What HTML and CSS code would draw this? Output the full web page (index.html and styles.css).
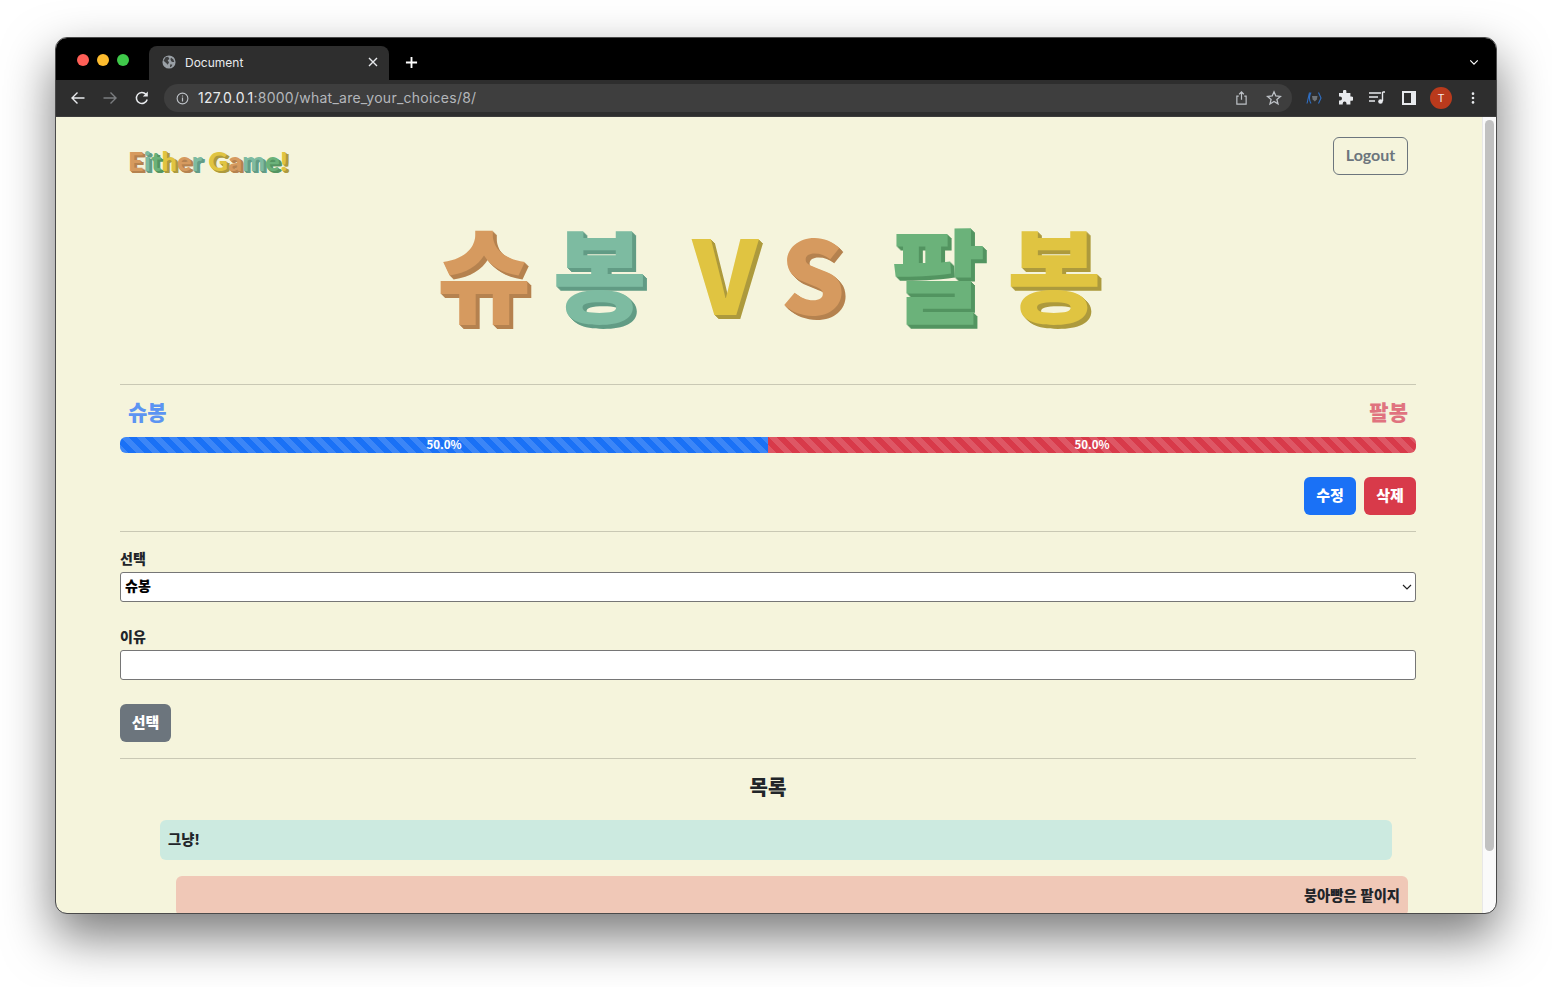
FILE: index.html
```html
<!DOCTYPE html>
<html lang="ko">
<head>
  <meta charset="UTF-8" />
  <title>Document</title>
  <link rel="stylesheet" href="styles.css">
</head>
<body>
  <div class="window">
    <div class="tabstrip">
      <div class="traffic">
        <span class="dot dot-red"></span>
        <span class="dot dot-yellow"></span>
        <span class="dot dot-green"></span>
      </div>
      <div class="tab">
        <svg class="tab-globe" viewBox="0 0 16 16"><circle cx="8" cy="8" r="7.500" fill="#9aa0a6"/><path d="M4 2.500 7 2 8.500 4.500 6.500 6 8 8.500 6.500 11 5 9.500 1.800 6.500ZM10.500 3l2.500 2 1 3-2 0-1.500-1-1-2.500ZM9.500 10.500l2.500.5-1.500 2.500-1.500.5Z" fill="#2e2e2e" opacity="0.85"/></svg>
        <span class="tab-title">Document</span>
        <svg class="tab-close" viewBox="0 0 10 10"><path d="M1 1l8 8M9 1l-8 8" stroke="#e8eaed" stroke-width="1.400"/></svg>
      </div>
      <svg class="new-tab" viewBox="0 0 14 14"><path d="M7 1v12M1 7h12" stroke="#fff" stroke-width="2"/></svg>
      <svg class="tab-menu" viewBox="0 0 12 8"><path d="M1.500 1.500 6 6l4.500-4.500" fill="none" stroke="#fff" stroke-width="1.400"/></svg>
    </div>

    <div class="toolbar">
      <svg class="tool" viewBox="0 0 16 16"><path d="M14.500 8H2M7.500 2.500 2 8l5.500 5.500" fill="none" stroke="#e8eaed" stroke-width="1.400"/></svg>
      <svg class="tool" viewBox="0 0 16 16"><path d="M1.500 8H14M8.500 2.500 14 8l-5.500 5.500" fill="none" stroke="#7b7d80" stroke-width="1.400"/></svg>
      <svg class="tool" viewBox="0 0 16 16"><path d="M13.200 9.500A5.500 5.500 0 1 1 12 4.300" fill="none" stroke="#e8eaed" stroke-width="1.500"/><path d="M13.800 1.500V6.500H8.800Z" fill="#e8eaed"/></svg>
      <div class="omnibox">
        <svg class="info" viewBox="0 0 14 14"><circle cx="7" cy="7" r="5.800" fill="none" stroke="#bdc1c6" stroke-width="1.200"/><path d="M7 6v4.200M7 3.700v1.200" stroke="#bdc1c6" stroke-width="1.300"/></svg>
        <span class="url"><b>127.0.0.1</b>:8000/what_are_your_choices/8/</span>
        <svg class="omni-icon share" viewBox="0 0 14 16"><path d="M4 6H2v8.500h10V6h-2M7 10V1.500M4.500 4 7 1.500 9.500 4" fill="none" stroke="#bdc1c6" stroke-width="1.300"/></svg>
        <svg class="omni-icon star" viewBox="0 0 16 16"><path d="M8 1.800 9.800 6l4.600.4-3.500 3 1.100 4.500L8 11.500l-4 2.400 1.100-4.500-3.500-3L6.200 6Z" fill="none" stroke="#bdc1c6" stroke-width="1.300"/></svg>
      </div>
      <svg class="ext ext-cast" viewBox="0 0 16 13"><path d="M3.500 1 1 12M5 1C3 4.500 3 8.500 5 12M12.500 1 15 6.500 12.500 12" fill="none" stroke="#2f6fc4" stroke-width="1.100"/><path d="M6 4.500h5.500l-.7 3.500L8.800 10 6.700 8Z" fill="#6f7479"/></svg>
      <svg class="ext puzzle" viewBox="0 0 16 16"><path d="M6 1.500a1.700 1.700 0 0 1 3.400 0V3h4v3.500h1a2 2 0 0 1 0 4.200h-1V14.500H9.500v-1a1.900 1.900 0 0 0-3.800 0v1H2V10.500h1a2 2 0 0 0 0-4H2V3h4Z" fill="#e8eaed"/></svg>
      <svg class="ext queue" viewBox="0 0 16 14"><path d="M0 2h12M0 6h9M0 10h6" stroke="#e8eaed" stroke-width="1.300"/><path d="M13.500 1v9" stroke="#e8eaed" stroke-width="1.400"/><path d="M13.500 1H16" stroke="#e8eaed" stroke-width="1.400"/><circle cx="11.500" cy="10.500" r="2.300" fill="#e8eaed"/></svg>
      <svg class="ext panel" viewBox="0 0 14 14"><path d="M0 0h14v14H0Z" fill="#e8eaed"/><path d="M2 2h7v10H2Z" fill="#2e2e2e"/></svg>
      <span class="avatar">T</span>
      <svg class="kebab" viewBox="0 0 4 16"><circle cx="2" cy="3" r="1.500" fill="#e8eaed"/><circle cx="2" cy="8" r="1.500" fill="#e8eaed"/><circle cx="2" cy="13" r="1.500" fill="#e8eaed"/></svg>
    </div>

    <div class="viewport">
      <main class="page">
        <nav class="topnav">
          <a class="logo">
            <span class="c-orange">E</span><span class="c-mint">i</span><span class="c-green">t</span><span class="c-yellow">h</span><span class="c-orange">e</span><span class="c-mint">r</span>
            <span class="c-yellow">G</span><span class="c-orange">a</span><span class="c-mint">m</span><span class="c-green">e</span><span class="c-yellow">!</span>
          </a>
          <button class="btn-logout">Logout</button>
        </nav>

        <h1 class="versus">
          <span class="c-orange">슈</span>
          <span class="c-mint">봉</span>
          <span class="vs">
            <span class="c-yellow">V</span>
            <span class="c-orange">S</span>
          </span>
          <span class="c-green">팔</span>
          <span class="c-yellow">봉</span>
        </h1>

        <hr class="rule rule-first">

        <div class="names">
          <span class="name-a">슈봉</span>
          <span class="name-b">팔봉</span>
        </div>
        <div class="progress">
          <div class="bar bar-blue" style="width: 50%">50.0%</div>
          <div class="bar bar-red" style="width: 50%">50.0%</div>
        </div>

        <div class="actions">
          <button class="btn btn-blue">수정</button>
          <button class="btn btn-red">삭제</button>
        </div>

        <hr class="rule rule-actions">

        <form class="vote">
          <label class="field-label" for="choice">선택</label>
          <select class="field field-select" id="choice">
            <option>슈봉</option>
            <option>팔봉</option>
          </select>
          <label class="field-label field-label-second" for="reason">이유</label>
          <input class="field" id="reason" type="text">
          <button class="btn btn-gray" type="button">선택</button>
        </form>

        <hr class="rule rule-list">

        <h2 class="list-title">목록</h2>
        <div class="comment comment-left">그냥!</div>
        <div class="comment comment-right">붕아빵은 팥이지</div>
      </main>
      <div class="scrollbar"><div class="thumb"></div></div>
    </div>
  </div>
</body>
</html>
```

FILE: styles.css
```css
* {
  box-sizing: border-box;
}

html, body {
  height: 100%;
}

body {
  margin: 0;
  padding: 38px 56px 0;
  background-color: #fff;
  overflow: hidden;
  font-family: "Noto Sans CJK KR", "Noto Sans", sans-serif;
}

/* browser frame */
.window {
  width: 1440px;
  height: 875px;
  border-radius: 11px;
  overflow: hidden;
  display: flex;
  flex-direction: column;
  outline: 1px solid #4a4a4a;
  box-shadow: 0 22px 50px 2px rgba(0, 0, 0, 0.52);
}

.tabstrip {
  height: 42px;
  background-color: #000;
  display: flex;
  align-items: flex-end;
  flex: none;
}

.traffic {
  width: 93px;
  height: 100%;
  display: flex;
  gap: 8px;
  padding: 16px 0 0 21px;
  flex: none;
}

.dot {
  width: 12px;
  height: 12px;
  border-radius: 50%;
}

.dot-red { background-color: #ff5f57; }
.dot-yellow { background-color: #febc2e; }
.dot-green { background-color: #3fc94a; }

.tab {
  width: 240px;
  height: 34px;
  background-color: #2e2e2e;
  border-radius: 8px 8px 0 0;
  display: flex;
  align-items: center;
  padding: 0 11px 2px 13px;
  flex: none;
}

.tab-globe {
  width: 14px;
  height: 14px;
  margin-right: 9px;
}

.tab-title {
  color: #e8eaed;
  font-family: Inter, sans-serif;
  font-size: 12px;
  flex: 1;
}

.tab-close {
  width: 10px;
  height: 10px;
}

.new-tab {
  width: 13px;
  height: 13px;
  margin: 0 0 11px 16px;
}

.tab-menu {
  width: 10px;
  height: 7px;
  margin: 0 17px 14px auto;
}

.toolbar {
  height: 37px;
  background-color: #2e2e2e;
  border-bottom: 1px solid #3c3c3c;
  display: flex;
  align-items: center;
  padding: 0 16px 0 14px;
  flex: none;
}

.tool {
  width: 16px;
  height: 16px;
  margin-right: 16px;
  flex: none;
}

.omnibox {
  width: 1128px;
  height: 28px;
  margin-left: -2px;
  background-color: #3e3e3e;
  border-radius: 14px;
  display: flex;
  align-items: center;
  padding: 0 10px 0 12px;
  flex: none;
}

.info {
  width: 13px;
  height: 13px;
  margin-right: 9px;
}

.url {
  color: #b4b7bb;
  font-family: Inter, sans-serif;
  font-size: 14px;
  letter-spacing: 0.25px;
  padding-bottom: 2px;
  flex: 1;
}

.url b {
  color: #e8eaed;
  font-weight: 400;
}

.omni-icon {
  flex: none;
}

.share {
  width: 13px;
  height: 16px;
  margin-right: 18px;
}

.star {
  width: 16px;
  height: 16px;
}

.ext {
  width: 16px;
  height: 14px;
  margin-left: 14px;
  flex: none;
}

.ext.puzzle {
  height: 16px;
  margin-left: 15px;
}

.ext.queue {
  margin-left: 16px;
}

.ext.panel {
  width: 14px;
  margin-left: 17px;
}

.avatar {
  width: 22px;
  height: 22px;
  margin-left: 14px;
  border-radius: 50%;
  background-color: #b93a1c;
  color: #f4e9e4;
  font-family: Roboto, sans-serif;
  font-size: 11px;
  display: flex;
  align-items: center;
  justify-content: center;
  flex: none;
}

.kebab {
  width: 4px;
  height: 14px;
  margin-left: 19px;
  flex: none;
}

.viewport {
  flex: 1;
  min-height: 0;
  display: flex;
}

/* page itself */
.page {
  flex: 1;
  min-width: 0;
  background-color: #f5f4dc;
  padding: 0 66px 0 64px;
  overflow: hidden;
}

.scrollbar {
  width: 14px;
  background-color: #fafafa;
  border-left: 1px solid #e8e8e8;
  padding: 3px 2px 0 2px;
  flex: none;
}

.thumb {
  height: 731px;
  background-color: #c1c1c1;
  border-radius: 5px;
}

.c-orange { color: #d69a5f; --shade: #b5824f; }
.c-mint { color: #7dbba1; --shade: #629c85; }
.c-green { color: #6bb27a; --shade: #539561; }
.c-yellow { color: #e0c441; --shade: #ad9a3d; }

.topnav {
  height: 58px;
  display: flex;
  justify-content: space-between;
  align-items: flex-start;
  padding: 20px 8px 0 8px;
}

.logo {
  font-family: Lato, sans-serif;
  font-size: 27px;
  font-weight: 900;
  letter-spacing: 0.25px;
  line-height: 1;
  margin-top: 10px;
  white-space: nowrap;
}

.logo span {
  text-shadow: 1px 1px 0 var(--shade), 2px 2px 0 var(--shade), 3px 2px 0 var(--shade);
}

.btn-logout {
  width: 75px;
  height: 38px;
  background: transparent;
  border: 1px solid #6c757d;
  border-radius: 6px;
  color: #6c757d;
  font-family: Lato, sans-serif;
  font-size: 16px;
  font-weight: 700;
  padding: 0 0 3px;
}

.versus {
  margin: 31px 0 0;
  height: 154px;
  padding-left: 2px;
  display: flex;
  justify-content: center;
  gap: 22px;
  font-size: 102px;
  font-weight: 900;
  line-height: 130px;
  white-space: nowrap;
}

.versus span {
  text-shadow: 1px 1px 0 var(--shade), 2px 2px 0 var(--shade), 3px 3px 0 var(--shade), 4px 4px 0 var(--shade);
}

.vs {
  display: flex;
  gap: 22px;
  margin: 0 24px;
}

.rule {
  margin: 0;
  border: 0;
  border-top: 1px solid #c9c8b4;
}

.rule-first {
  margin-top: 24px;
}

.names {
  height: 36px;
  margin-top: 8px;
  padding: 0 8px;
  display: flex;
  justify-content: space-between;
  align-items: center;
  font-size: 21px;
  font-weight: 900;
}

.name-a { color: #5c94f2; }
.name-b { color: #e0737f; }

.progress {
  height: 16px;
  margin-top: 8px;
  display: flex;
  border-radius: 6px;
  overflow: hidden;
}

.bar {
  color: #fff;
  font-size: 11.500px;
  font-weight: 700;
  line-height: 14px;
  text-align: center;
  background-image: linear-gradient(45deg, rgba(255,255,255,.15) 25%, transparent 25%, transparent 50%, rgba(255,255,255,.15) 50%, rgba(255,255,255,.15) 75%, transparent 75%, transparent);
  background-size: 16px 16px;
}

.bar-blue { background-color: #1a71f6; }
.bar-red { background-color: #d83a4a; }

.actions {
  margin-top: 24px;
  display: flex;
  justify-content: flex-end;
  gap: 8px;
}

.btn {
  height: 38px;
  width: 52px;
  border: 0;
  border-radius: 6px;
  color: #fff;
  font-family: inherit;
  font-size: 15px;
  font-weight: 900;
  padding: 0 0 4px;
}

.btn-blue { background-color: #1a71f6; }
.btn-red { background-color: #d83a4a; }
.btn-gray { background-color: #6c757d; display: block; width: 51px; margin-top: 24px; }

.rule-actions {
  margin-top: 16px;
}

.field-label {
  display: block;
  height: 25px;
  margin-top: 15px;
  color: #212529;
  font-size: 14px;
  font-weight: 900;
  line-height: 22px;
}

.field-label-second {
  margin-top: 23px;
}

.field {
  display: block;
  width: 100%;
  height: 30px;
  border: 1px solid #767676;
  border-radius: 3px;
  background-color: #fff;
  font-family: inherit;
  font-size: 14px;
  font-weight: 900;
  color: #000;
  padding: 0 4px 5px;
}

.field-select {
  appearance: none;
  background-image: url("data:image/svg+xml,%3Csvg xmlns='http://www.w3.org/2000/svg' viewBox='0 0 10 6'%3E%3Cpath d='M1 1l4 4 4-4' fill='none' stroke='%23222' stroke-width='1.200'/%3E%3C/svg%3E");
  background-repeat: no-repeat;
  background-position: right 3px center;
  background-size: 10px 6px;
}

.rule-list {
  margin-top: 16px;
}

.list-title {
  margin: 12px 0 0;
  color: #212529;
  font-size: 20px;
  font-weight: 900;
  line-height: 32px;
  text-align: center;
}

.comment {
  height: 40px;
  width: 1232px;
  border-radius: 6px;
  padding: 0 8px;
  color: #212529;
  font-size: 14.300px;
  font-weight: 900;
  line-height: 37px;
}

.comment-left {
  margin: 17px 0 0 40px;
  background-color: #cceae0;
}

.comment-right {
  margin: 16px 0 0 56px;
  background-color: #f0c8b7;
  text-align: right;
}
```
